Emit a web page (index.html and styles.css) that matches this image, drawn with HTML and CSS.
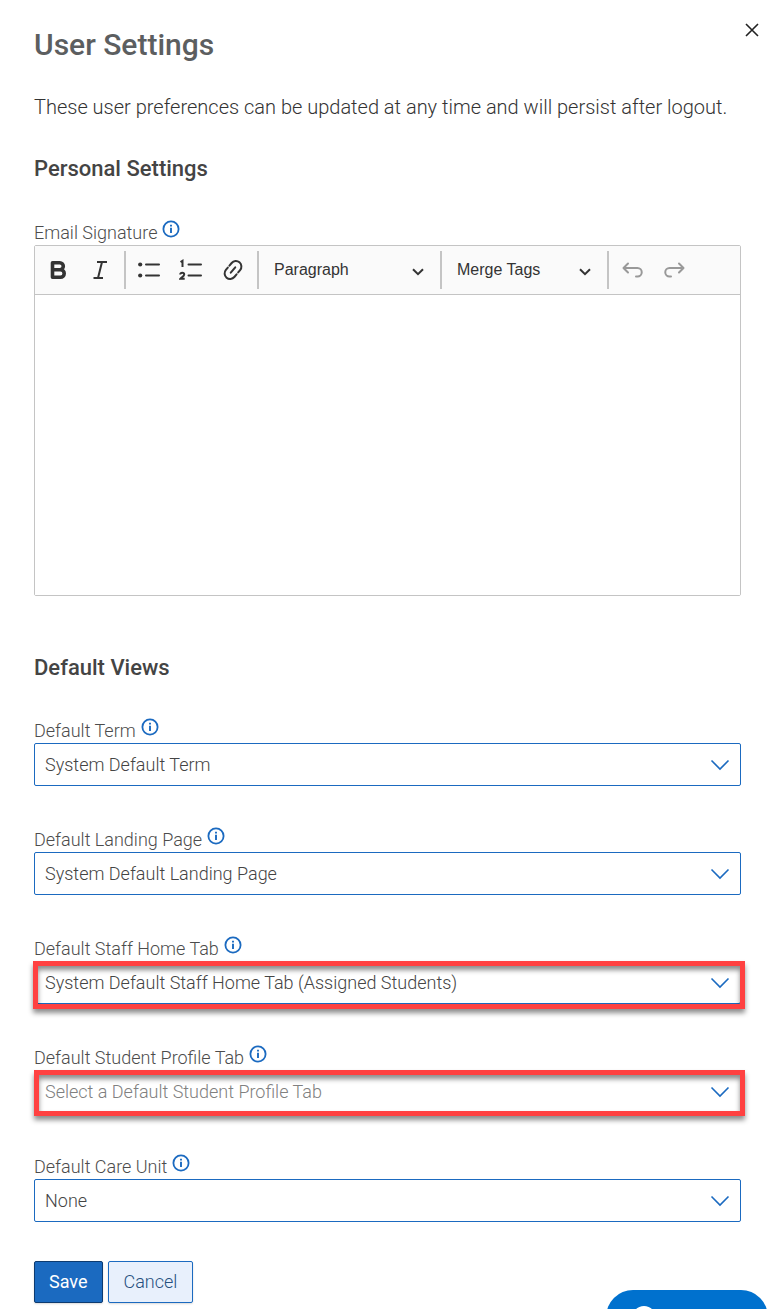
FILE: index.html
```html
<!DOCTYPE html>
<html lang="en">
<head>
<meta charset="utf-8">
<meta name="viewport" content="width=device-width, initial-scale=1">
<title>User Settings</title>
<link rel="stylesheet" href="styles.css">
</head>
<body>
<svg class="sprite" aria-hidden="true">
  <symbol id="info" viewBox="0 0 18 18">
    <circle cx="9" cy="9" r="7.6" fill="none" stroke="currentColor" stroke-width="1.8"/>
    <path d="M9 7.7v5.2M9 4.7v1.7" fill="none" stroke="currentColor" stroke-width="1.9"/>
  </symbol>
  <symbol id="chevron" viewBox="0 0 20 12">
    <path d="M1.5 1.5l8.5 8.5 8.5-8.5" fill="none" stroke="currentColor" stroke-width="1.6"/>
  </symbol>
  <symbol id="caret" viewBox="0 0 12 8">
    <path d="M1 1.2l5 5 5-5" fill="none" stroke="currentColor" stroke-width="2"/>
  </symbol>
</svg>

<main class="dialog">
  <header class="dialog-header">
    <h1 class="title">User Settings</h1>
    <button class="close" type="button" aria-label="Close">
      <svg class="close-icon" viewBox="0 0 14 14"><path d="M1 1l12 12M13 1L1 13" fill="none" stroke="currentColor" stroke-width="1.6"/></svg>
    </button>
  </header>
  <p class="intro">These user preferences can be updated at any time and will persist after logout.</p>

  <form class="form">
    <h2 class="section-title">Personal Settings</h2>
    <div class="field signature">
      <div class="label-row">
        <label for="signature">Email Signature</label>
        <button class="info" type="button" aria-label="About email signature"><svg class="info-icon"><use href="#info"/></svg></button>
      </div>
      <div class="editor">
        <div class="toolbar">
          <div class="tool-group marks">
            <button class="tool" type="button" aria-label="Bold"><svg class="tool-icon" viewBox="0 0 24 24"><path d="M6.500 4.800h7.300a3.500 3.500 0 0 1 0 7H6.500zM6.500 11.800h8a3.700 3.700 0 0 1 0 7.400h-8z" fill="none" stroke="currentColor" stroke-width="3.600" stroke-linejoin="round"/></svg></button>
            <button class="tool" type="button" aria-label="Italic"><svg class="tool-icon" viewBox="0 0 24 24"><path d="M9 4h10M5.500 20h9.500M14 4l-4 16" fill="none" stroke="currentColor" stroke-width="2"/></svg></button>
          </div>
          <div class="tool-group lists">
            <button class="tool" type="button" aria-label="Bulleted list"><svg class="tool-icon" viewBox="0 0 24 24"><circle cx="3.200" cy="6.500" r="2.100" fill="currentColor"/><circle cx="3.200" cy="17.500" r="2.100" fill="currentColor"/><path d="M9 6.500h13M9 17.500h13" fill="none" stroke="currentColor" stroke-width="2" stroke-linecap="round"/></svg></button>
            <button class="tool" type="button" aria-label="Numbered list"><svg class="tool-icon" viewBox="0 0 24 24"><path d="M1.500 4l2-1.200V9M1.200 16.500c.2-2.200 4-2.200 4 0 0 1.500-2.300 2.700-3.700 4.200h4.200" fill="none" stroke="currentColor" stroke-width="2"/><path d="M9.500 6.500h12.500M9.500 17.500h12.500" fill="none" stroke="currentColor" stroke-width="2" stroke-linecap="round"/></svg></button>
            <button class="tool" type="button" aria-label="Link"><svg class="tool-icon" viewBox="0 0 24 24"><g transform="rotate(-50 12 12)" fill="none" stroke="currentColor" stroke-width="2" stroke-linecap="round"><path d="M8.500 12h7M11 17.500H7.500A5.500 5.500 0 0 1 7.500 6.500h3M13 6.500h3.500a5.500 5.500 0 0 1 0 11h-3"/></g></svg></button>
          </div>
          <div class="tool-group pick heading">
            <select class="tool-select" aria-label="Heading"><option>Paragraph</option></select>
            <svg class="caret"><use href="#caret"/></svg>
          </div>
          <div class="tool-group pick merge">
            <select class="tool-select" aria-label="Merge tags"><option>Merge Tags</option></select>
            <svg class="caret"><use href="#caret"/></svg>
          </div>
          <div class="tool-group history">
            <button class="tool" type="button" aria-label="Undo" disabled><svg class="tool-icon" viewBox="0 0 24 24"><path d="M7 5.500L2.500 10 7 14.500M3 10h13.500a4 4 0 0 1 0 8.500H15" fill="none" stroke="currentColor" stroke-width="2" stroke-linecap="round" stroke-linejoin="round"/></svg></button>
            <button class="tool" type="button" aria-label="Redo" disabled><svg class="tool-icon" viewBox="0 0 24 24"><path d="M16 5.500L20.500 10 16 14.500M20 10H6.500a4 4 0 0 0 0 8.500H8" fill="none" stroke="currentColor" stroke-width="2" stroke-linecap="round" stroke-linejoin="round"/></svg></button>
          </div>
        </div>
        <textarea class="editor-body" id="signature"></textarea>
      </div>
    </div>

    <h2 class="section-title">Default Views</h2>
    <div class="fields">
      <div class="field">
        <div class="label-row"><label for="term">Default Term</label><button class="info" type="button" aria-label="About default term"><svg class="info-icon"><use href="#info"/></svg></button></div>
        <div class="select-box"><select class="select" id="term"><option>System Default Term</option></select><svg class="chevron"><use href="#chevron"/></svg></div>
      </div>
      <div class="field">
        <div class="label-row"><label for="landing">Default Landing Page</label><button class="info" type="button" aria-label="About default landing page"><svg class="info-icon"><use href="#info"/></svg></button></div>
        <div class="select-box"><select class="select" id="landing"><option>System Default Landing Page</option></select><svg class="chevron"><use href="#chevron"/></svg></div>
      </div>
      <div class="field">
        <div class="label-row"><label for="staff">Default Staff Home Tab</label><button class="info" type="button" aria-label="About default staff home tab"><svg class="info-icon"><use href="#info"/></svg></button></div>
        <div class="select-box"><select class="select" id="staff"><option>System Default Staff Home Tab (Assigned Students)</option></select><svg class="chevron"><use href="#chevron"/></svg><span class="highlight highlight-tall"></span></div>
      </div>
      <div class="field">
        <div class="label-row"><label for="student">Default Student Profile Tab</label><button class="info" type="button" aria-label="About default student profile tab"><svg class="info-icon"><use href="#info"/></svg></button></div>
        <div class="select-box"><select class="select placeholder" id="student"><option>Select a Default Student Profile Tab</option></select><svg class="chevron"><use href="#chevron"/></svg><span class="highlight"></span></div>
      </div>
      <div class="field">
        <div class="label-row"><label for="care">Default Care Unit</label><button class="info" type="button" aria-label="About default care unit"><svg class="info-icon"><use href="#info"/></svg></button></div>
        <div class="select-box"><select class="select" id="care"><option>None</option></select><svg class="chevron"><use href="#chevron"/></svg></div>
      </div>
    </div>

    <div class="actions">
      <button class="button save" type="submit">Save</button>
      <button class="button cancel" type="button">Cancel</button>
    </div>
  </form>
</main>
<button class="help" type="button" aria-label="Help"><span class="help-icon"></span></button>
</body>
</html>
```
FILE: styles.css
```css
* { box-sizing: border-box; }

body {
  margin: 0;
  background: #fff;
  color: #333;
  font-family: Roboto, "Liberation Sans", sans-serif;
  font-size: 18px;
  font-weight: 300;
  line-height: 24px;
}

button, select, textarea { font: inherit; color: inherit; margin: 0; }
button { padding: 0; border: 0; background: none; cursor: pointer; }
.sprite { display: none; }

.dialog { padding: 23px 26px 6px 34px; }

.dialog-header { display: flex; justify-content: space-between; align-items: flex-start; margin-right: -18px; }
.title { margin: 0; padding-top: 2px; color: #5c5e60; font-size: 30px; font-weight: 500; line-height: 40px; }
.close { display: flex; color: #222; }
.close-icon { width: 14px; height: 14px; }

.intro { margin: 28px 0 0; font-size: 20px; line-height: 28px; }
.section-title { margin: 34px 0 0; color: #444; font-size: 22px; font-weight: 500; line-height: 28px; }

.label-row { display: flex; align-items: flex-end; gap: 5px; height: 26px; color: #4c4c4c; }
.info { display: flex; padding-bottom: 7px; color: #1b6ac0; }
.info-icon { width: 18px; height: 18px; }

.signature { margin-top: 36px; }
.editor { border: 1px solid #c4c4c4; border-radius: 2px; }
.toolbar { display: flex; padding: 5px 0; border-bottom: 1px solid #c4c4c4; background: #fafafa; }
.tool-group { display: flex; align-items: center; height: 38px; border-right: 2px solid #c4c4c4; }
.tool-group:last-child { border-right: 0; }
.tool { display: flex; color: #333; }
.tool:disabled { color: #999; }
.tool-icon { width: 24px; height: 24px; }
.marks { gap: 18px; width: 91px; padding-left: 11px; }
.lists { gap: 18px; padding: 0 12px 0 11px; }
.history { gap: 18px; padding-left: 12px; }
.pick { position: relative; font-family: "Liberation Sans", Arial, sans-serif; font-size: 16px; font-weight: 400; }
.heading { width: 183px; }
.merge { width: 167px; }
.tool-select { width: 100%; height: 36px; padding: 0 36px 1px 15px; border: 0; background: none; appearance: none; }
.caret { position: absolute; right: 16px; top: 17px; width: 12px; height: 8px; pointer-events: none; }
.editor-body { display: block; width: 100%; height: 300px; padding: 12px; border: 0; background: #fff; resize: none; }
.signature + .section-title { margin-top: 58px; }

.fields { display: flex; flex-direction: column; gap: 40px; margin-top: 35px; }
.select-box { position: relative; }
.select { display: block; width: 100%; height: 43px; padding: 0 40px 0 10px; border: 1px solid #1b6ac0; border-radius: 2px; background: #fff; color: #444; appearance: none; }
.placeholder { color: #808080; }
.chevron { position: absolute; right: 11px; top: 16px; width: 20px; height: 12px; color: #1b6ac0; pointer-events: none; }
.highlight {
  position: absolute;
  inset: 0 -4px -3px 0;
  border: 5px solid #ff4141;
  box-shadow: 0 4px 5px rgba(0, 0, 0, 0.45), inset 0 4px 5px rgba(0, 0, 0, 0.45);
  pointer-events: none;
}
.highlight-tall { inset: 0 -4px -5px -1px; }

.actions { display: flex; gap: 5px; margin-top: 39px; }
.button { height: 42px; padding: 0 15px; border: 1px solid #1b6ac0; border-radius: 2px; box-shadow: 0 1px 2px rgba(0, 0, 0, 0.15); }
.save { padding: 0 14px; border-color: #0d3b70; background: #1b6ac0; color: #fff; font-weight: 400; }
.cancel { background: #e8f0fc; color: #27507f; }

.help { position: fixed; right: -1px; bottom: -35px; display: flex; width: 162px; height: 54px; padding: 16px 26px; border-radius: 27px; background: #0071ce; }
.help-icon { width: 24px; height: 24px; border-radius: 50%; background: #fff; }
```
